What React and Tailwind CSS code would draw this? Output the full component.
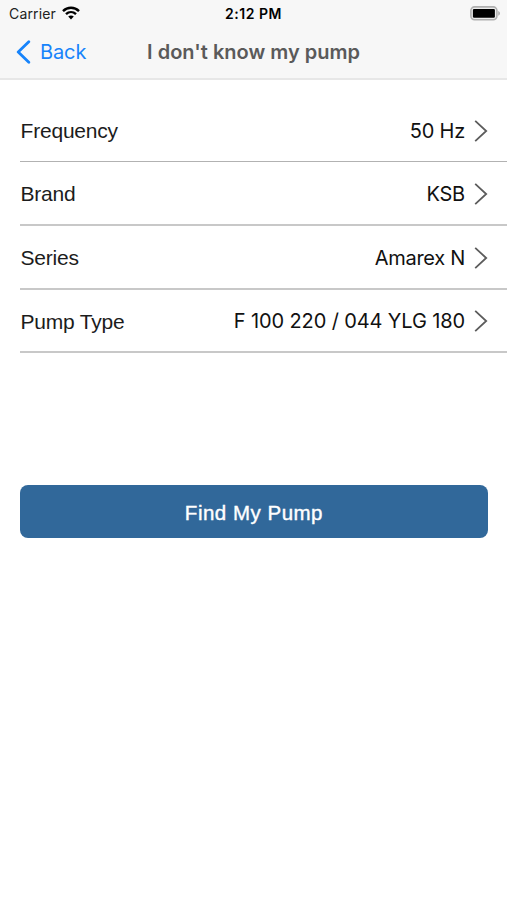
const rows = [
  { label: "Frequency", value: "50 Hz", border: "h-[63px] border-b border-[#b2b2b2]", valueClass: "tracking-[-0.2px]" },
  { label: "Brand", value: "KSB", border: "h-[64px] border-b-2 border-[#c8c8c8]", valueClass: "tracking-[-0.2px]" },
  { label: "Series", value: "Amarex N", border: "h-[63.5px] border-b-2 border-[#c8c8c8]", valueClass: "tracking-[-0.3px]" },
  { label: "Pump Type", value: "F 100 220 / 044 YLG 180", border: "h-[63.5px] border-b-2 border-[#c8c8c8]", valueClass: "tracking-[-0.12px]" },
];

function WifiIcon() {
  return (
    <svg width="18" height="14" viewBox="0 0 18 14" fill="none" stroke="#000" strokeWidth="2.4">
      <path d="M1 5.1C5.5 0.6 12.5 0.6 17 5.1" />
      <path d="M4 8.2C6.9 5.4 11.1 5.4 14 8.2" />
      <path d="M9 13.4L6.2 10.5C7.8 9 10.2 9 11.8 10.5Z" fill="#000" stroke="none" />
    </svg>
  );
}

function BatteryIcon() {
  return (
    <svg width="31" height="15" viewBox="0 0 31 15">
      <rect x="0.9" y="0.9" width="26" height="12.8" rx="3.6" fill="#ececec" stroke="#b0b0b0" strokeWidth="1.6" />
      <rect x="2.9" y="2.9" width="22" height="8.8" rx="1.2" fill="#000" />
      <path d="M28.2 4.9C30.6 5.9 30.6 8.7 28.2 9.7Z" fill="#b0b0b0" />
    </svg>
  );
}

function StatusBar() {
  return (
    <div className="grid h-[27px] grid-cols-3 items-center">
      <div className="flex items-center pl-[9px]">
        <span className="text-[14px] leading-[27px] tracking-[0.15px] text-[#222]">Carrier</span>
        <span className="-mt-[2px] ml-[6px]">
          <WifiIcon />
        </span>
      </div>
      <span className="pt-px text-center text-[14px] leading-[26px] font-semibold tracking-[0.5px] text-black">2:12 PM</span>
      <div className="flex justify-end pr-[6px]">
        <BatteryIcon />
      </div>
    </div>
  );
}

function NavBar() {
  return (
    <div className="grid h-[50px] grid-cols-[1fr_auto_1fr] items-center">
      <button className="flex items-center pl-[15px] text-[#1784fb]">
        <svg width="16" height="24" viewBox="0 0 16 24" fill="none" stroke="currentColor" strokeWidth="2.8" strokeLinecap="round" strokeLinejoin="round">
          <path d="M13.8 1.8L3.2 12L13.8 22.2" />
        </svg>
        <span className="ml-[9px] text-[20px] leading-[24px] tracking-[-0.1px]">Back</span>
      </button>
      <h1 className="text-[20px] leading-[24px] font-semibold text-[#5a5a5a]">I don't know my pump</h1>
      <span />
    </div>
  );
}

function Row({ row }) {
  return (
    <div className={`ml-[20px] flex items-center justify-between pt-[2px] pr-[19px] ${row.border}`}>
      <span className="pl-[0.5px] font-['Liberation_Sans',sans-serif] text-[21px] tracking-[-0.2px] text-[#1c1c1c]">{row.label}</span>
      <span className="flex items-center">
        <span className={`text-[20px] text-[#111] ${row.valueClass}`}>{row.value}</span>
        <svg className="ml-[9px]" width="14" height="24" viewBox="0 0 14 24" fill="none" stroke="#5c5c5c" strokeWidth="1.8">
          <path d="M1.2 1.8L12.2 12L1.2 22.2" />
        </svg>
      </span>
    </div>
  );
}

export default function App() {
  return (
    <div className="h-[900px] w-[507px] bg-white font-['Inter',sans-serif]">
      <header className="h-[80px] border-b-2 border-[#e7e7e7] bg-[#f7f7f7]">
        <StatusBar />
        <NavBar />
      </header>
      <main className="pt-[19px]">
        {rows.map((row) => (
          <Row key={row.label} row={row} />
        ))}
        <div className="mt-[131.5px] pr-[19.5px] pl-[20.4px]">
          <button className="h-[53.5px] w-full rounded-[8px] bg-[#31689a] pt-[4px] font-['Liberation_Sans',sans-serif] text-[20.5px] tracking-[0.5px] text-white [-webkit-text-stroke:0.4px_white]">
            Find My Pump
          </button>
        </div>
      </main>
    </div>
  );
}
